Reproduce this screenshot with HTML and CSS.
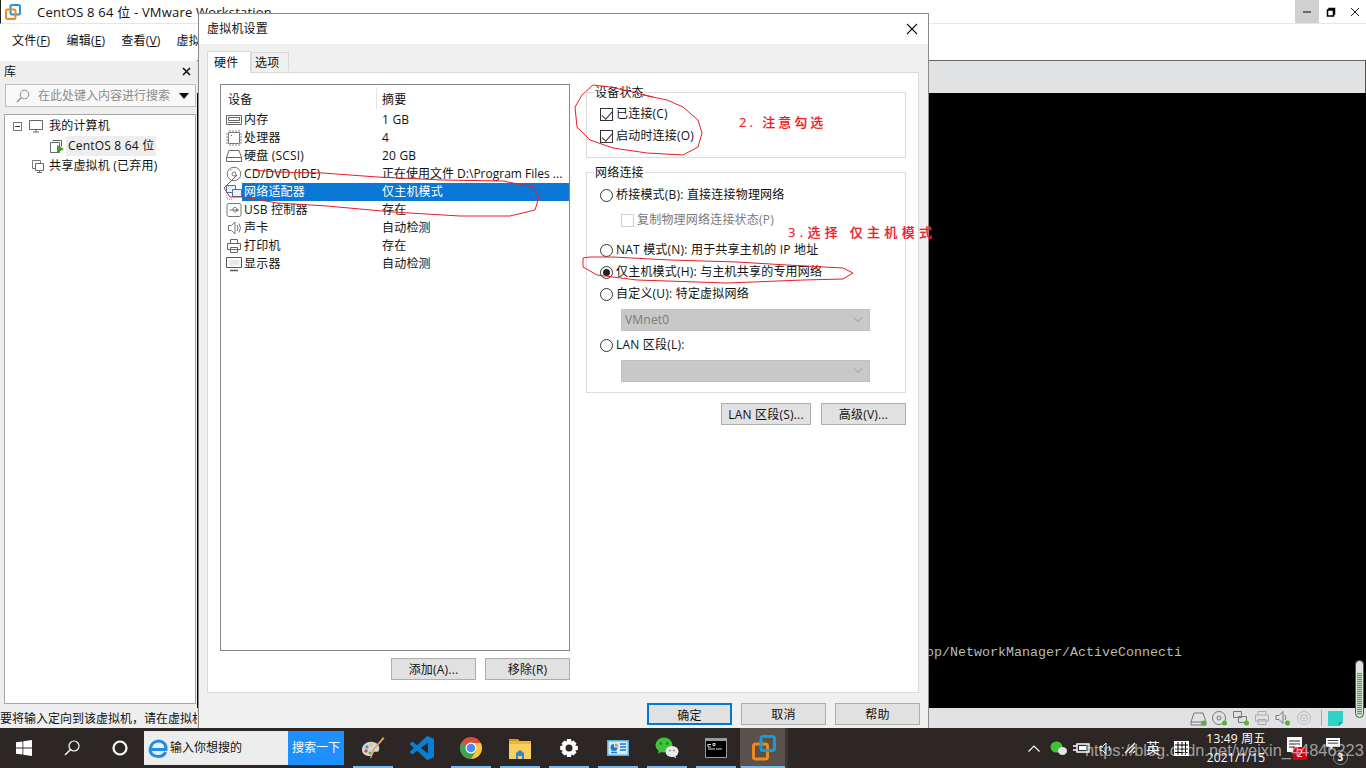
FILE: index.html
```html
<!DOCTYPE html>
<html lang="zh">
<head>
<meta charset="utf-8">
<title>虚拟机设置</title>
<link rel="stylesheet" href="styles.css">
</head>
<body>
<div class="screen">
  <div class="app">
    <header class="titlebar">
      <svg class="logo" width="16" height="16" viewBox="0 0 16 16"><rect x="5.500" y="1" width="9.500" height="9.500" rx="1.500" fill="none" stroke="#1b9ad6" stroke-width="2"/><rect x="1" y="5.500" width="9.500" height="9.500" rx="1.500" fill="none" stroke="#ef8a1d" stroke-width="2"/></svg>
      <span class="title-text">CentOS 8 64 位 - VMware Workstation</span>
      <div class="winctl">
        <div class="winbtn hover"><svg width="10" height="10" viewBox="0 0 10 10"><path d="M1 5h8" stroke="#000" stroke-width="1"/></svg></div>
        <div class="winbtn"><svg width="10" height="10" viewBox="0 0 10 10"><path d="M1.500 3h6v6h-6zM3 3V1.500h5.500V7H7.500" fill="none" stroke="#000" stroke-width="1.500"/></svg></div>
        <div class="winbtn"><svg width="10" height="10" viewBox="0 0 10 10"><path d="M1 1l8 8M9 1l-8 8" stroke="#000" stroke-width=".9"/></svg></div>
      </div>
    </header>
    <nav class="menubar">
      <span>文件(<u>F</u>)</span><span>编辑(<u>E</u>)</span><span>查看(<u>V</u>)</span><span>虚拟机(<u>M</u>)</span>
    </nav>
    <div class="workspace">
      <aside class="library">
        <div class="lib-head"><span>库</span><svg width="9" height="9" viewBox="0 0 9 9"><path d="M1 1l7 7M8 1l-7 7" stroke="#111" stroke-width="1.600"/></svg></div>
        <div class="lib-search">
          <svg width="14" height="14" viewBox="0 0 14 14"><circle cx="8.500" cy="5.500" r="4.300" fill="none" stroke="#888" stroke-width="1"/><path d="M5.500 8.500L1 13" stroke="#888" stroke-width="1.200"/></svg>
          <span class="lib-placeholder">在此处键入内容进行搜索</span>
          <i class="lib-caret"></i>
        </div>
        <div class="tree">
          <div class="tree-row">
            <i class="tree-toggle"></i>
            <svg class="tree-icon" width="16" height="14" viewBox="0 0 16 14"><path d="M1.500 1.500h13v9h-13zM5 13h6M8 10.500V13" fill="none" stroke="#666"/></svg>
            <span>我的计算机</span>
          </div>
          <div class="tree-row child">
            <svg width="16" height="16" viewBox="0 0 16 16"><path d="M3.500 2.500h9M1.500 4.500h9v10h-9z" fill="none" stroke="#666"/><path d="M12.500 2.500v6" stroke="#666"/><path d="M8 7l7 4-7 4z" fill="#4d9b2f"/></svg>
            <span class="tree-selected">CentOS 8 64 位</span>
          </div>
          <div class="tree-row shared">
            <svg class="tree-icon" width="14" height="15" viewBox="0 0 14 15"><path d="M1.500 1.500h8v8h-8z" fill="none" stroke="#777"/><path d="M4.500 4.500h8v7h-8zM8.500 11.500v2M6 13.500h5" fill="#fff" stroke="#666"/></svg>
            <span>共享虚拟机 (已弃用)</span>
          </div>
        </div>
      </aside>
      <section class="content">
        <div class="tabstrip"></div>
        <div class="console"><p class="console-line">/org/freedesktop/NetworkManager/ActiveConnecti</p>
          <div class="meter"><i></i></div>
        </div>
      </section>
    </div>
    <footer class="statusbar">
      <span class="status-text">要将输入定向到该虚拟机，请在虚拟机</span>
      <div class="status-icons">
        <svg width="18" height="16" viewBox="0 0 18 16"><path d="M1 12l3-9h9l3 9v3H1zM1 12h15" fill="none" stroke="#777"/><circle cx="13.500" cy="13" r="2.500" fill="#55b52e"/></svg>
        <svg width="18" height="16" viewBox="0 0 18 16"><circle cx="8" cy="8" r="6.500" fill="none" stroke="#777"/><circle cx="8" cy="8" r="2" fill="none" stroke="#777"/><circle cx="13.500" cy="13" r="2.500" fill="#55b52e"/></svg>
        <svg width="18" height="16" viewBox="0 0 18 16"><path d="M1.500 1.500h8v6h-8zM6.500 6.500h8v6h-8z" fill="#e1e2e4" stroke="#777"/><circle cx="14.500" cy="13" r="2.500" fill="#55b52e"/></svg>
        <svg width="18" height="16" viewBox="0 0 18 16"><path d="M5 5V1.500h8V5M2.500 5h13v6h-13zM5 9.500h8v5H5z" fill="#e1e2e4" stroke="#aaa"/></svg>
        <svg width="18" height="16" viewBox="0 0 18 16"><path d="M2 5.500h3l4-4v12l-4-4H2zM11 5q1.500 2.500 0 5" fill="none" stroke="#777"/><circle cx="13.500" cy="13" r="2.500" fill="#55b52e"/></svg>
        <svg width="18" height="16" viewBox="0 0 18 16"><circle cx="9" cy="8" r="6.500" fill="none" stroke="#bbb"/><circle cx="9" cy="8" r="3.500" fill="none" stroke="#bbb"/><circle cx="9" cy="8" r="1" fill="#bbb"/></svg>
        <i class="status-sep"></i>
        <svg class="note" width="15" height="15" viewBox="0 0 15 15"><path d="M0 0h15v11l-4 4H0z" fill="#2ed3c6"/><path d="M11 15v-4h4z" fill="#1a9c92"/></svg>
      </div>
    </footer>
  </div>

  <div class="taskbar">
    <div class="tb-btn">
      <svg width="16" height="16" viewBox="0 0 16 16"><path d="M0 2.300l6.500-.9v6.200H0zM7.300 1.300L16 0v7.600H7.300zM0 8.400h6.500v6.200L0 13.700zM7.300 8.400H16V16l-8.700-1.300z" fill="#fff"/></svg>
    </div>
    <div class="tb-btn">
      <svg width="16" height="16" viewBox="0 0 16 16"><circle cx="10" cy="6" r="5" fill="none" stroke="#fff" stroke-width="1.200"/><path d="M6.500 9.500L1 15" stroke="#fff" stroke-width="1.500"/></svg>
    </div>
    <div class="tb-btn">
      <svg width="16" height="16" viewBox="0 0 16 16"><circle cx="8" cy="8" r="6.500" fill="none" stroke="#fff" stroke-width="2.200"/></svg>
    </div>
    <div class="tb-search">
      <svg width="20" height="20" viewBox="0 0 20 20"><path d="M3.500 11.500h14.500C18.500 6 15 3 10.500 3 6.500 3 3 6 2.200 11c-.6 4 2.500 7.500 7.800 7.500 3.500 0 6.500-1.500 7.500-4.500" fill="none" stroke="#1d8fe6" stroke-width="3"/></svg>
      <span class="tb-search-text">输入你想搜的</span>
      <span class="tb-search-btn">搜索一下</span>
    </div>
    <div class="tb-apps">
      <div class="tb-app run">
        <svg width="24" height="24" viewBox="0 0 24 24"><path d="M1 14C1 8 7 5 12 6c5 1 7 4 6 8-1 3-3 1-5 2-2 1-1 4-4 4-4 0-8-2-8-6z" fill="#cfd8de"/><circle cx="6" cy="11" r="1.700" fill="#4a90d9"/><circle cx="10" cy="9" r="1.700" fill="#f2c230"/><circle cx="5" cy="15" r="1.700" fill="#d9453d"/><circle cx="9" cy="17" r="1.500" fill="#58a845"/><path d="M22 1l1.500 1.500L13 14l-2 1 1-2z" fill="#d9a35a"/><path d="M12 13l-3 9 1 .5 4-9z" fill="#e8a34a"/></svg>
      </div>
      <div class="tb-app">
        <svg width="24" height="24" viewBox="0 0 24 24"><path fill="#0a7fd1" d="M23.150 2.587L18.210.21a1.494 1.494 0 0 0-1.705.29l-9.460 8.630-4.120-3.128a.999.999 0 0 0-1.276.057L.327 7.261A1 1 0 0 0 .326 8.740L3.899 12 .326 15.260a1 1 0 0 0 .001 1.479L1.650 17.940a.999.999 0 0 0 1.276.057l4.120-3.128 9.460 8.630a1.492 1.492 0 0 0 1.704.29l4.942-2.377A1.500 1.500 0 0 0 24 20.060V3.939a1.500 1.500 0 0 0-.85-1.352zm-5.146 14.861L10.826 12l7.178-5.448v10.896z"/></svg>
      </div>
      <div class="tb-app run">
        <svg width="24" height="24" viewBox="0 0 24 24"><circle cx="12" cy="12" r="11" fill="#dd4b3e"/><path d="M12 12L2.500 6.500A11 11 0 0 0 12 23l5.500-9.500z" fill="#3aa655"/><path d="M12 7h9.800A11 11 0 0 1 12 23l5-8z" fill="#fcc934"/><circle cx="12" cy="12" r="5.500" fill="#fff"/><circle cx="12" cy="12" r="4.300" fill="#4c8bf5"/></svg>
      </div>
      <div class="tb-app run">
        <svg width="24" height="24" viewBox="0 0 24 24"><path d="M1 3h9l2 2.500H1z" fill="#d39b17"/><path d="M1 5h22v18H1z" fill="#f7cf5a"/><path d="M1 5h22v3H1z" fill="#e9b53a"/><path d="M8 23v-6l4-3 4 3v6h-2v-3h-4v3z" fill="#2f87d1"/></svg>
      </div>
      <div class="tb-app run">
        <svg width="20" height="20" viewBox="0 0 20 20"><path d="M8 1h4l.5 2.500 2-1 3 3-1.300 2L18.800 8v4l-2.600.5 1.300 2-3 3-2-1.300L12 19H8l-.5-2.800-2 1.300-3-3 1.300-2L1.200 12V8l2.600-.5-1.300-2 3-3 2 1.300z" fill="#fff"/><circle cx="10" cy="10" r="3.500" fill="#2c2624"/></svg>
      </div>
      <div class="tb-app run">
        <svg width="22" height="20" viewBox="0 0 22 20"><rect x="0" y="2" width="22" height="16" fill="#5aaee8"/><rect x="1.500" y="3.500" width="19" height="13" fill="#d4ecfb"/><path d="M7 6a3.500 3.500 0 1 0 3.500 3.500H7z" fill="#1f78c8"/><path d="M8 5.500a3 3 0 0 1 3 3H8z" fill="#ef8a1d"/><path d="M13 6h6M13 9h6M13 12h6M4 14.500h6" stroke="#1f78c8" stroke-width="1.300"/></svg>
      </div>
      <div class="tb-app run">
        <svg width="24" height="22" viewBox="0 0 24 22"><ellipse cx="9" cy="8" rx="8.500" ry="7.500" fill="#3fc33b"/><path d="M4 13l-1 4 4-2.500z" fill="#3fc33b"/><circle cx="6" cy="6.500" r="1.200" fill="#1e7d1d"/><circle cx="12" cy="6.500" r="1.200" fill="#1e7d1d"/><ellipse cx="17" cy="14.500" rx="6.500" ry="5.500" fill="#ececec"/><path d="M20 18.500l1.500 3-3.500-2z" fill="#ececec"/><circle cx="15" cy="13.500" r=".9" fill="#888"/><circle cx="19" cy="13.500" r=".9" fill="#888"/></svg>
      </div>
      <div class="tb-app run">
        <svg width="22" height="20" viewBox="0 0 22 20"><rect width="22" height="20" fill="#9a9a9a"/><rect x="1" y="3" width="20" height="16" fill="#000"/><path d="M3 6.500h3M3 6v3h3M8 5.500h2v2H8zM3 11h7" stroke="#ddd" fill="none"/><path d="M11 11h6" stroke="#ddd"/></svg>
      </div>
      <div class="tb-app active">
        <svg width="24" height="26" viewBox="0 0 24 26"><rect x="1.500" y="9" width="14" height="15" rx="2" fill="none" stroke="#ef8a1d" stroke-width="3"/><rect x="9" y="1.500" width="13.500" height="14" rx="2" fill="none" stroke="#1b9ad6" stroke-width="3"/></svg>
      </div>
    </div>
    <div class="tray">
      <div class="tray-cell w24"><svg width="12" height="7" viewBox="0 0 12 7"><path d="M.500 6.500L6 1l5.500 5.500" fill="none" stroke="#fff" stroke-width="1.200"/></svg></div>
      <div class="tray-cell w24"><svg width="17" height="15" viewBox="0 0 17 15"><ellipse cx="6.500" cy="6" rx="6" ry="5.500" fill="#3fc33b"/><ellipse cx="12.500" cy="10" rx="4.500" ry="4" fill="#e6e6e6"/></svg></div>
      <div class="tray-cell w24"><svg width="18" height="12" viewBox="0 0 18 12"><path d="M4 2h12v8H4zM0 4h4M0 8h4" fill="none" stroke="#fff" stroke-width="1.400"/><path d="M6 4h7v4H6z" fill="#fff"/></svg></div>
      <div class="tray-cell w24"><svg width="15" height="13" viewBox="0 0 15 13"><path d="M1 4.500h2.500L7 1v11L3.500 8.500H1zM10 4q1.500 2.500 0 5" fill="none" stroke="#fff"/></svg></div>
      <div class="tray-cell w24"><svg width="12" height="12" viewBox="0 0 12 12"><path d="M1 11L11 1M5 11l6-6M9 11l2-2" stroke="#fff" stroke-width="1.200"/></svg></div>
      <div class="tray-cell w22 tray-lang">英</div>
      <div class="tray-cell w34"><svg width="15" height="15" viewBox="0 0 15 15"><rect width="15" height="15" fill="#fff"/><path d="M4 1v13M8 1v13M11.500 1v13M1 4h13M1 8h13M1 11.500h13" stroke="#000"/></svg></div>
      <div class="tray-clock"><span>13:49 周五</span><span>2021/1/15</span></div>
      <div class="tray-cell w52 notif n-msg">
        <svg width="15" height="15" viewBox="0 0 15 15"><path d="M0 0h15v10l-5 5H0z" fill="#fff"/><path d="M2 4h11M2 7h11M2 10h6" stroke="#222"/></svg>
        <b class="badge-red">2</b>
      </div>
      <div class="tray-cell w28 notif n-act">
        <svg width="16" height="14" viewBox="0 0 16 14"><path d="M0 0h16v10H8l-3 4v-4H0z" fill="#fff"/><path d="M2 3h12M2 6h12" stroke="#222"/></svg>
        <b class="badge-round">3</b>
      </div>
    </div>
    <span class="watermark">https://blog.csdn.net/weixin_44846223</span>
  </div>

  <div class="dialog">
    <div class="dlg-title"><span>虚拟机设置</span><svg width="12" height="12" viewBox="0 0 12 12"><path d="M1 1l10 10M11 1L1 11" stroke="#111" stroke-width="1.100"/></svg></div>
    <div class="dlg-body">
      <div class="tabs"><span class="tab on">硬件</span><span class="tab">选项</span></div>
      <div class="panel">
        <div class="left-col">
          <div class="devlist">
            <div class="dev-head"><span>设备</span><span class="col2">摘要</span></div>
            <div class="dev-row">
              <svg width="16" height="16" viewBox="0 0 16 16"><path d="M.500 3.500h15v9H.500zM2.500 5.500h11v3h-11zM2 10.500h12" fill="none" stroke="#666"/></svg>
              <span>内存</span><span class="col2">1 GB</span></div>
            <div class="dev-row">
              <svg width="16" height="16" viewBox="0 0 16 16"><path d="M2.500 2.500h11v11h-11z" fill="none" stroke="#777"/><path d="M4 0v2M7 0v2M10 0v2M13 0v2M4 14v2M7 14v2M10 14v2M13 14v2M0 4h2M0 7h2M0 10h2M0 13h2M14 4h2M14 7h2M14 10h2M14 13h2" stroke="#888"/><path d="M5 5h1v1H5z" fill="#666"/></svg>
              <span>处理器</span><span class="col2">4</span></div>
            <div class="dev-row">
              <svg width="16" height="16" viewBox="0 0 16 16"><path d="M.500 9.500L3 2.500h10l2.500 7v4H.500zM.500 9.500h15" fill="none" stroke="#666"/></svg>
              <span>硬盘 (SCSI)</span><span class="col2">20 GB</span></div>
            <div class="dev-row">
              <svg width="16" height="16" viewBox="0 0 16 16"><circle cx="8" cy="8" r="6.800" fill="none" stroke="#777"/><circle cx="8" cy="8" r="2" fill="none" stroke="#777"/><path d="M4 5q1-1.500 2.500-1.800" fill="none" stroke="#aaa"/></svg>
              <span>CD/DVD (IDE)</span><span class="col2 ellipsis">正在使用文件 D:\Program Files ...</span></div>
            <div class="dev-row sel">
              <svg width="16" height="16" viewBox="0 0 16 16"><path d="M.500 1.500h9v7h-9z" fill="#e8f2fb" stroke="#3b76a8"/><path d="M6.500 5.500h9v7h-9z" fill="#e8f2fb" stroke="#3b76a8"/><path d="M1 11v4h5" fill="none" stroke="#888" stroke-dasharray="1 1"/></svg>
              <span class="sel-text">网络适配器</span><span class="col2 sel-text">仅主机模式</span></div>
            <div class="dev-row">
              <svg width="16" height="16" viewBox="0 0 16 16"><rect x="1" y="1.500" width="14" height="13" rx="2" fill="none" stroke="#777"/><path d="M3.500 8h9M12.500 8l-2-1.500v3zM6 8l2-2.500h2M7 8l1.500 2H10" fill="none" stroke="#777"/></svg>
              <span>USB 控制器</span><span class="col2">存在</span></div>
            <div class="dev-row">
              <svg width="16" height="16" viewBox="0 0 16 16"><path d="M2.500 5.500h3L9 2v12l-3.500-3.500h-3zM11 5q2 3 0 6M13 3.500q3 4.500 0 9" fill="none" stroke="#777"/></svg>
              <span>声卡</span><span class="col2">自动检测</span></div>
            <div class="dev-row">
              <svg width="16" height="16" viewBox="0 0 16 16"><path d="M4.500 5.500v-4h7v4M1.500 5.500h13v6h-13zM4.500 9.500h7v5h-7z" fill="#fff" stroke="#666"/></svg>
              <span>打印机</span><span class="col2">存在</span></div>
            <div class="dev-row">
              <svg width="16" height="16" viewBox="0 0 16 16"><path d="M.500 1.500h15v10H.500z" fill="none" stroke="#555"/><path d="M2.500 3.500h11v6h-11z" fill="#e8e8e8"/><path d="M4 14.500h8" stroke="#555" stroke-width="1.500"/></svg>
              <span>显示器</span><span class="col2">自动检测</span></div>
          </div>
          <div class="btn-row">
            <button class="btn">添加(A)...</button>
            <button class="btn">移除(R)</button>
          </div>
        </div>
        <div class="right-col">
          <fieldset class="group g-status">
            <legend>设备状态</legend>
            <label class="opt"><i class="check on"></i>已连接(C)</label>
            <label class="opt"><i class="check on"></i>启动时连接(O)</label>
          </fieldset>
          <fieldset class="group g-net">
            <legend>网络连接</legend>
            <label class="opt"><i class="radio"></i>桥接模式(B): 直接连接物理网络</label>
            <label class="opt sub disabled"><i class="check"></i>复制物理网络连接状态(P)</label>
            <label class="opt gap"><i class="radio"></i>NAT 模式(N): 用于共享主机的 IP 地址</label>
            <label class="opt"><i class="radio on"></i>仅主机模式(H): 与主机共享的专用网络</label>
            <label class="opt"><i class="radio"></i>自定义(U): 特定虚拟网络</label>
            <div class="select"><span>VMnet0</span><svg width="10" height="6" viewBox="0 0 10 6"><path d="M1 .5l4 4 4-4" fill="none" stroke="#999"/></svg></div>
            <label class="opt lan"><i class="radio"></i>LAN 区段(L):</label>
            <div class="select"><span></span><svg width="10" height="6" viewBox="0 0 10 6"><path d="M1 .5l4 4 4-4" fill="none" stroke="#999"/></svg></div>
          </fieldset>
          <div class="btn-row right">
            <button class="btn wide">LAN 区段(S)...</button>
            <button class="btn">高级(V)...</button>
          </div>
        </div>
      </div>
      <div class="dlg-foot">
        <button class="btn default">确定</button>
        <button class="btn">取消</button>
        <button class="btn">帮助</button>
      </div>
    </div>
  </div>

  <svg class="ink" width="1366" height="768" viewBox="0 0 1366 768">
    <path d="M237 175L224 188 230 197 243 197 277 203 327 206 393 212 460 216 510 216 535 210 539 197 533 187 503 181 443 180 377 177 323 173 277 172 253 170"/>
    <path d="M653 97L633 92 610 87 593 85 582 95 575 107 577 127 590 140 613 148 647 153 683 155 698 147 702 133 698 120 683 107 667 100 643 95"/>
    <path d="M583 258L583 267 597 275 637 280 727 283 803 280 843 279 853 273 843 268 787 265 737 262 670 260 613 257 590 257Z"/>
  </svg>
  <span class="note-red n2">2. 注意勾选</span>
  <span class="note-red n3">3.选择 仅主机模式</span>
</div>
</body>
</html>
```
FILE: styles.css
```css
* { box-sizing: border-box; }
html, body { margin: 0; padding: 0; }
body { font: 12px/18px "Open Sans", "Noto Sans CJK SC", sans-serif; letter-spacing: .2px; color: #111; background: #fff; }
.screen { position: relative; width: 1366px; height: 768px; overflow: hidden; display: flex; flex-direction: column; }
.app { flex: 1; min-height: 0; display: flex; flex-direction: column; background: #fff; }

.titlebar { height: 24px; display: flex; align-items: center; padding-left: 5px; border-bottom: 1px solid #e6e6e6; border-left: 1px solid #222; }
.logo { flex: none; margin-left: -1px; }
.title-text { margin-left: 16px; font-size: 13px; letter-spacing: .2px; }
.winctl { margin-left: auto; display: flex; height: 23px; }
.winbtn { width: 24px; display: flex; align-items: center; justify-content: center; }
.winbtn:last-child { width: 23px; }
.winbtn.hover { background: #d0d0d0; }
.menubar { height: 36px; display: flex; align-items: center; gap: 16px; padding: 0 0 3px 12px; }
.menubar span { min-width: 38.5px; }

.workspace { flex: 1; min-height: 0; display: flex; }
.library { width: 197px; flex: none; display: flex; flex-direction: column; background: #eeeeee; border-top: 1px solid #fff; padding: 0 1px 4px 4px; }
.lib-head { height: 23px; display: flex; align-items: center; justify-content: space-between; padding: 0 5px 2px 0; }
.lib-search { height: 23px; margin: 0 0 7px 1px; background: #f8f8f8; border: 1px solid #bdbdbd; display: flex; align-items: center; padding: 0 6px 0 10px; color: #8a8a8a; }
.lib-placeholder { margin-left: 8px; flex: 1; letter-spacing: 0; }
.lib-caret { width: 0; height: 0; border: 5px solid transparent; border-top: 6px solid #111; border-bottom: 0; }
.tree { flex: 1; background: #fff; border: 1px solid #a6a6a6; padding-top: 1px; }
.tree-row { height: 20px; display: flex; align-items: center; }
.tree-toggle { width: 9px; height: 9px; margin-left: 8px; border: 1px solid #777; position: relative; flex: none; }
.tree-toggle::after { content: ""; position: absolute; left: 1px; right: 1px; top: 3px; height: 1px; background: #333; }
.tree-row .tree-icon { margin-left: 6px; margin-right: 5px; }
.tree-row.child { padding-left: 44px; }
.tree-selected { background: #eeeeee; padding: 0 2px 0 2px; margin-left: 1px; line-height: 20px; }
.tree-row.shared { padding-left: 23px; }
.tree-row.shared .tree-icon { margin: 0 4px 0 3px; }

.content { flex: 1; min-width: 0; display: flex; flex-direction: column; }
.tabstrip { height: 33px; background: #e1e2e4; border-top: 1px solid #666; border-right: 1px solid #555; }
.console { flex: 1; min-height: 0; background: #000; position: relative; }
.console-line { margin: 0; padding: 552px 0 0 617px; font: 13.33px/16px "Liberation Mono", monospace; letter-spacing: 0; color: #b9b9b9; white-space: nowrap; }
.meter { position: absolute; right: 2px; bottom: -10px; width: 9px; height: 58px; border: 1px solid #555; border-radius: 5px; background: #e1e2e4; z-index: 1; overflow: hidden; }
.meter i { position: absolute; left: 1px; right: 1px; bottom: 2px; height: 42px; background: repeating-linear-gradient(#3fb24f 0 1px, #b8dcb9 1px 2px); }

.statusbar { height: 20px; display: flex; align-items: center; background: #e1e2e4; }
.status-text { width: 197px; height: 20px; background: #eeeeee; overflow: hidden; white-space: nowrap; letter-spacing: 0; line-height: 22px; }
.status-icons { margin-left: auto; display: flex; align-items: center; gap: 3px; padding-right: 23px; }
.status-sep { width: 1px; height: 16px; background: #aaa; margin: 0 1px 0 5px; }
.note { margin-left: 2px; }

.taskbar { position: relative; height: 40px; flex: none; display: flex; align-items: center; background: #2c2624; color: #fff; }
.tb-btn { width: 48px; height: 40px; display: flex; align-items: center; justify-content: center; }
.tb-search { width: 200px; height: 34px; display: flex; align-items: center; background: #ededed; color: #111; padding-left: 4px; letter-spacing: 0; }
.tb-search-text { margin-left: 2px; flex: 1; }
.tb-search-btn { width: 56px; height: 34px; line-height: 34px; text-align: center; background: #1e8fff; color: #fff; }
.tb-apps { display: flex; margin-left: 4px; height: 40px; }
.tb-app { width: 49px; height: 40px; display: flex; align-items: center; justify-content: center; position: relative; }
.tb-app.run::after { content: ""; position: absolute; left: 5px; width: 40px; bottom: 0; height: 2px; background: #76b9ed; }
.tb-app.active { width: 48px; background: linear-gradient(90deg, #5a514d 45px, #3c3532 45px); }
.tb-app.active::after { content: ""; position: absolute; left: 1px; width: 44px; bottom: 0; height: 2px; background: #76b9ed; }
.tray { margin-left: auto; display: flex; height: 40px; padding-right: 12px; }
.tray-cell { display: flex; align-items: center; justify-content: center; position: relative; flex: none; }
.w22 { width: 22px; } .w24 { width: 24px; } .w28 { width: 28px; } .w34 { width: 34px; } .w52 { width: 52px; }
.tray-lang { font-size: 14px; }
.tray-clock { width: 76px; flex: none; display: flex; flex-direction: column; align-items: center; line-height: 19px; padding-top: 1px; }
.badge-red { position: absolute; left: 19px; bottom: 8px; width: 14px; height: 13px; background: #d8000f; font: 10px/13px "Open Sans", sans-serif; text-align: center; color: #fff; }
.badge-round { position: absolute; left: 7px; bottom: 3px; width: 15px; height: 15px; border: 1px solid #888; border-radius: 50%; background: #2c2624; font: bold 10px/13px "Open Sans", sans-serif; text-align: center; }
.notif { padding-bottom: 8px; }
.n-msg { padding-right: 12px; }
.n-act { padding-right: 14px; }
.watermark { position: absolute; left: 1085px; top: 12px; font: 16.4px/20px "Liberation Sans", sans-serif; letter-spacing: 0; color: rgba(235, 235, 235, .62); white-space: nowrap; }

.dialog { position: absolute; left: 198px; top: 13px; width: 731px; height: 715px; background: #f0f0f0; border: 1px solid #8a8a8a; border-bottom: 0; display: flex; flex-direction: column; }
.dlg-title { height: 30px; flex: none; background: #fff; display: flex; align-items: center; justify-content: space-between; padding: 0 10px 0 8px; }
.dlg-body { flex: 1; min-height: 0; background: #f0f0f0; padding: 7px 9px 0 8px; display: flex; flex-direction: column; }
.tabs { display: flex; align-items: flex-end; height: 21px; }
.tab { width: 38px; height: 19px; line-height: 20px; padding-left: 3px; background: #f0f0f0; border: 1px solid #d9d9d9; border-bottom: 0; margin-bottom: 1px; }
.tab.on { width: 44px; height: 22px; line-height: 22px; padding-left: 6px; background: #fff; border-bottom: 0; margin-bottom: -1px; position: relative; z-index: 1; }
.panel { height: 621px; flex: none; background: #fff; border: 1px solid #d9d9d9; display: flex; padding: 11px 12px 0 12px; }
.left-col { width: 350px; flex: none; display: flex; flex-direction: column; }
.devlist { height: 567px; flex: none; border: 1px solid #828790; padding: 0 0 0 5px; background: #fff; }
.dev-head { height: 26px; display: flex; align-items: center; padding: 4px 0 0 2px; position: relative; }
.dev-head .col2 { left: 156px; }
.dev-head::after { content: ""; position: absolute; left: 150px; top: 2px; height: 22px; width: 1px; background: #e5e5e5; }
.dev-row { height: 18px; display: flex; align-items: center; position: relative; white-space: nowrap; }
.dev-row svg { flex: none; margin-right: 2px; }
.col2 { position: absolute; left: 156px; }
.ellipsis { width: 190px; overflow: hidden; letter-spacing: 0; }
.dev-row.sel::before { content: ""; position: absolute; left: 16px; right: 0; top: 0; bottom: 0; background: #0a78d4; }
.dev-row.sel > * { position: relative; }
.dev-row.sel .col2 { position: absolute; }
.sel-text { color: #fff; }
.btn-row { display: flex; justify-content: flex-end; gap: 9px; margin-top: 7px; }
.btn { width: 85px; height: 22px; padding: 2px 0 0; background: #e1e1e1; border: 1px solid #adadad; font: inherit; letter-spacing: .2px; line-height: 18px; color: #111; }
.btn.wide { width: 90px; }
.btn.default { border: 2px solid #0078d7; padding-top: 2px; }
.right-col { width: 320px; margin-left: 16px; display: flex; flex-direction: column; }
.group { margin: 0; padding: 0 0 0 13px; border: 1px solid #dcdcdc; min-width: 0; position: relative; display: flex; flex-direction: column; }
.group legend { background: #fff; line-height: 18px; padding: 0 1px; position: absolute; top: -9px; left: 7px; margin: 0; }
.g-status { height: 66px; margin-top: 8px; padding-top: 10px; }
.g-net { height: 221px; margin-top: 14px; padding-top: 11px; }
.opt { height: 22px; display: flex; align-items: center; white-space: nowrap; gap: 3px; }
.opt.sub { padding-left: 21px; margin-top: 3px; }
.opt.gap { margin-top: 8px; }
.opt.lan { margin-top: 3px; }
.disabled { color: #7a7a7a; }
.check { width: 13px; height: 13px; border: 1px solid #333; position: relative; flex: none; background: #fff; }
.check.on::after { content: ""; position: absolute; left: 3px; top: 0; width: 5px; height: 9px; border: solid #333; border-width: 0 1.4px 1.4px 0; transform: rotate(42deg); }
.disabled .check { border-color: #cfcfcf; }
.radio { width: 13px; height: 13px; border: 1px solid #333; border-radius: 50%; flex: none; position: relative; background: #fff; }
.radio.on::after { content: ""; position: absolute; left: 2px; top: 2px; width: 7px; height: 7px; border-radius: 50%; background: #222; }
.select { width: 249px; height: 22px; margin: 4px 0 0 21px; flex: none; background: #c8c8c8; display: flex; align-items: center; justify-content: space-between; padding: 0 6px 0 3px; color: #7a7a7a; border: 1px solid #c0c0c0; }
.right { margin-top: 10px; gap: 10px; }
.dlg-foot { display: flex; justify-content: flex-end; gap: 9px; margin-top: 10px; margin-right: -1px; }

.ink { position: absolute; left: 0; top: 0; pointer-events: none; }
.ink path { fill: none; stroke: #ec1c24; stroke-width: 1; }
.note-red { position: absolute; color: #e8232a; font-weight: 500; font-size: 13px; line-height: 16px; white-space: nowrap; text-shadow: 0 0 1px rgba(255, 120, 120, .6); }
.n2 { left: 739px; top: 114px; letter-spacing: 3px; }
.n3 { left: 788px; top: 224px; letter-spacing: 4.3px; }
```
